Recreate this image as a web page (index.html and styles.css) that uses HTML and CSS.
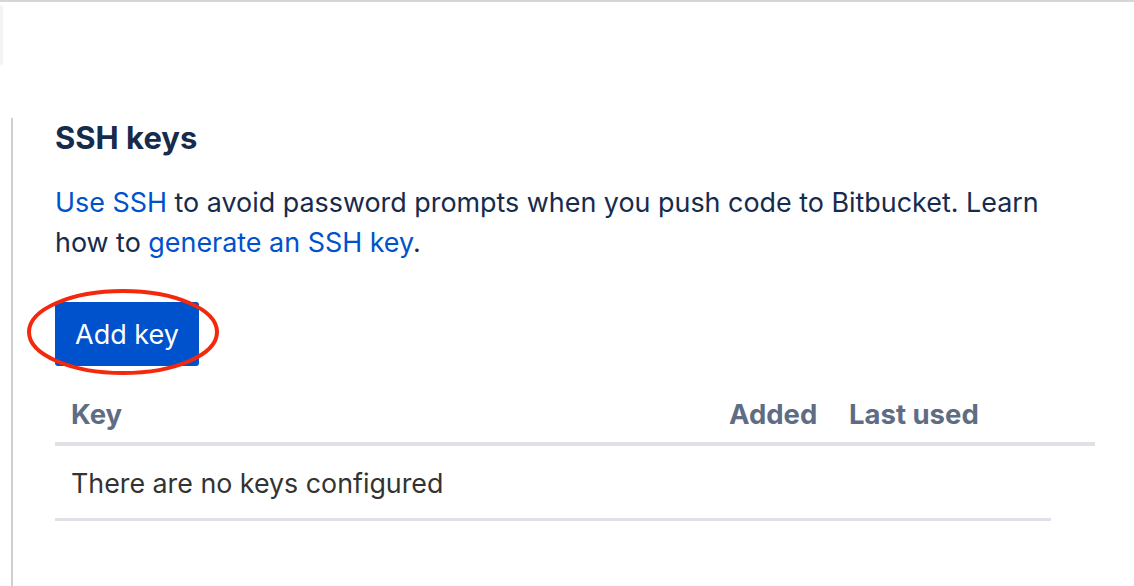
FILE: index.html
```html
<!DOCTYPE html>
<html>
<head>
<meta charset="utf-8">
<link rel="stylesheet" href="styles.css">
</head>
<body>
<div class="topbar"></div>
<div class="stub"></div>
<main class="page">
  <h2 class="title">SSH keys</h2>
  <p class="intro"><a href="#">Use SSH</a> to avoid password prompts when you push code to Bitbucket. Learn how to <a href="#">generate an SSH key</a>.</p>
  <div class="btn-wrap">
    <button class="btn">Add key</button>
    <svg class="circle" width="196" height="92" viewBox="0 0 196 92"><ellipse cx="98" cy="46" rx="94" ry="41" fill="none" stroke="#f3290d" stroke-width="4"/></svg>
  </div>
  <div class="thead">
    <div class="cell">Key</div>
    <div class="cell">Added</div>
    <div class="cell">Last used</div>
  </div>
  <div class="row">There are no keys configured</div>
</main>
</body>
</html>
```

FILE: styles.css
```css
html, body {
  margin: 0;
  background: #fff;
  font-family: Inter, "Noto Sans", sans-serif;
  color: #172b4d;
}
.topbar {
  height: 0;
  border-top: 2px solid #d6d6d6;
}
.stub {
  width: 3px;
  height: 60px;
  margin-top: 3px;
  background: #f3f3f3;
  border-radius: 0 4px 4px 0;
}
.page {
  margin: 53px 0 0 11px;
  border-left: 2px solid #cfcfcf;
  padding: 2px 0 80px 42px;
  width: 1040px;
}
.title {
  margin: 0;
  font-size: 31px;
  line-height: 36px;
  font-weight: 700;
  color: #172b4d;
}
.intro {
  margin: 26px 0 0;
  max-width: 1010px;
  font-size: 26.9px;
  line-height: 40px;
}
.intro a {
  color: #0052cc;
  text-decoration: none;
}
.btn-wrap {
  position: relative;
  margin-top: 40px;
  width: 144px;
  height: 64px;
}
.btn {
  display: block;
  width: 144px;
  height: 64px;
  padding: 0;
  border: 0;
  border-radius: 3px;
  background: #0052cc;
  color: #fff;
  font-family: Inter, "Noto Sans", sans-serif;
  font-size: 27px;
}
.circle {
  position: absolute;
  left: -30px;
  top: -16px;
}
.thead {
  display: grid;
  grid-template-columns: 658px 120px 1fr;
  padding: 28px 0 8px;
  border-bottom: 4px solid #dfe1e6;
  font-size: 27.5px;
  line-height: 40px;
  font-weight: 700;
  color: #5e6c84;
}
.cell {
  padding: 0 16px;
}
.row {
  width: 964px;
  padding: 17px 16px 15px;
  border-bottom: 3px solid #dfe1e6;
  font-size: 26.8px;
  line-height: 40px;
  color: #333;
}
```
